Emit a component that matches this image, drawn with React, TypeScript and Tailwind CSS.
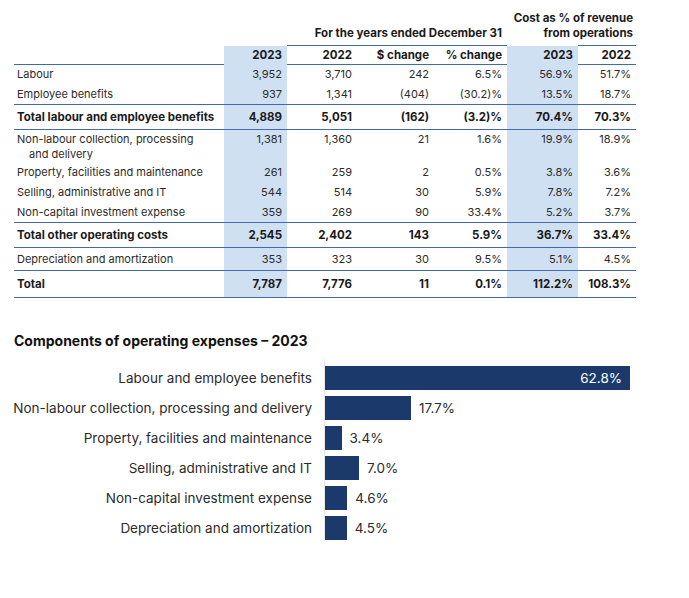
import React from 'react'

const HL = 'bg-[#cfe0f3]'
const LINE = 'border-[#3f6ca8]'

type Row = {
  label: React.ReactNode
  values: string[]
  bold?: boolean
  h: string
  line?: boolean
  center?: boolean
}

const rows: Row[] = [
  { label: 'Labour', values: ['3,952', '3,710', '242', '6.5%', '56.9%', '51.7%'], h: 'h-[20px]' },
  { label: 'Employee benefits', values: ['937', '1,341', '(404)', '(30.2)%', '13.5%', '18.7%'], h: 'h-[20px]', line: true },
  { label: 'Total labour and employee benefits', values: ['4,889', '5,051', '(162)', '(3.2)%', '70.4%', '70.3%'], bold: true, h: 'h-[25px]', line: true, center: true },
  {
    label: (
      <>
        <span className="block">Non-labour collection, processing</span>
        <span className="block pl-3">and delivery</span>
      </>
    ),
    values: ['1,381', '1,360', '21', '1.6%', '19.9%', '18.9%'],
    h: 'h-[33px]',
  },
  { label: 'Property, facilities and maintenance', values: ['261', '259', '2', '0.5%', '3.8%', '3.6%'], h: 'h-[20px]' },
  { label: 'Selling, administrative and IT', values: ['544', '514', '30', '5.9%', '7.8%', '7.2%'], h: 'h-[20px]' },
  { label: 'Non-capital investment expense', values: ['359', '269', '90', '33.4%', '5.2%', '3.7%'], h: 'h-[20px]', line: true },
  { label: 'Total other operating costs', values: ['2,545', '2,402', '143', '5.9%', '36.7%', '33.4%'], bold: true, h: 'h-[25px]', line: true, center: true },
  { label: 'Depreciation and amortization', values: ['353', '323', '30', '9.5%', '5.1%', '4.5%'], h: 'h-[23px]', line: true, center: true },
  { label: 'Total', values: ['7,787', '7,776', '11', '0.1%', '112.2%', '108.3%'], bold: true, h: 'h-[27px]', line: true, center: true },
]

const bars = [
  { label: 'Labour and employee benefits', pct: 62.8, inside: true },
  { label: 'Non-labour collection, processing and delivery', pct: 17.7 },
  { label: 'Property, facilities and maintenance', pct: 3.4 },
  { label: 'Selling, administrative and IT', pct: 7.0 },
  { label: 'Non-capital investment expense', pct: 4.6 },
  { label: 'Depreciation and amortization', pct: 4.5 },
]

const GRID = 'grid grid-cols-[210px_63px_70px_77px_73px_71px_58px]'

function TableRow({ row }: { row: Row }) {
  return (
    <div
      className={`${GRID} ${row.h} ${row.line ? `border-b ${LINE}` : ''} ${
        row.bold ? 'font-bold text-[11.5px] text-[#1a1a1a]' : ''
      }`}
    >
      <div className={`pl-[3px] leading-[15px] ${row.center ? 'self-center' : 'pt-[2px]'}`}>{row.label}</div>
      {row.values.map((v, i) => (
        <div
          key={i}
          className={`text-right pr-[5px] leading-[15px] ${i === 0 || i === 4 ? HL : ''} ${
            row.center ? 'flex items-center justify-end' : 'pt-[2px]'
          }`}
        >
          {v}
        </div>
      ))}
    </div>
  )
}

export default function App() {
  return (
    <div className="w-[689px] h-[598px] bg-white text-[#2b2b2b] font-['Inter','Noto_Sans',sans-serif] pl-[14px] pt-[11px]">
      {/* Table */}
      <div className="w-[622px] text-[11px]">
        <div className={`${GRID} font-bold text-[11.5px] text-[#1a1a1a] leading-[15px]`}>
          <div />
          <div />
          <div className={`col-span-3 flex items-end justify-end pr-[5px] pb-[4px] border-b ${LINE}`}>
            For the years ended December 31
          </div>
          <div className="col-span-2 flex flex-col items-end">
            <div className="text-right pr-[3px] pb-[4px]">
              Cost as % of revenue
              <br />
              from operations
            </div>
            <div className="flex w-full">
              <div className="w-[71px]" />
              <div className="flex-1 h-px bg-[#3f6ca8]" />
            </div>
          </div>
        </div>
        <div className={`${GRID} h-[19px] border-b ${LINE} font-bold text-[11.5px] text-[#1a1a1a] leading-[19px]`}>
          <div />
          {['2023', '2022', '$ change', '% change', '2023', '2022'].map((h, i) => (
            <div key={i} className={`text-right pr-[5px] ${i === 0 || i === 4 ? HL : ''}`}>
              {h}
            </div>
          ))}
        </div>
        {rows.map((r, i) => (
          <TableRow key={i} row={r} />
        ))}
      </div>

      {/* Chart */}
      <div className="mt-[33px] text-[14px] font-bold text-[#111] leading-[20px]">
        Components of operating expenses – 2023
      </div>
      <div className="flex mt-[8px] text-[13.5px] text-[#2b2b2b]">
        <div className="w-[298px] pt-[7px] flex flex-col gap-[6px]">
          {bars.map((b) => (
            <div key={b.label} className="h-[24px] flex items-center justify-end whitespace-nowrap">
              {b.label}
            </div>
          ))}
        </div>
        <div className="ml-[12px] border-l border-[#e6e6e6] pt-[7px] pb-[1px] flex flex-col gap-[6px] w-[310px]">
          {bars.map((b) => (
            <div key={b.label} className="h-[24px] flex items-center">
              <div
                className="h-full bg-[#1b3a6b] flex items-center justify-end"
                style={{ width: `${b.pct * 4.857}px` }}
              >
                {b.inside && <span className="text-white pr-[8px]">{b.pct.toFixed(1)}%</span>}
              </div>
              {!b.inside && <span className="ml-[8px]">{b.pct.toFixed(1)}%</span>}
            </div>
          ))}
        </div>
      </div>
    </div>
  )
}
